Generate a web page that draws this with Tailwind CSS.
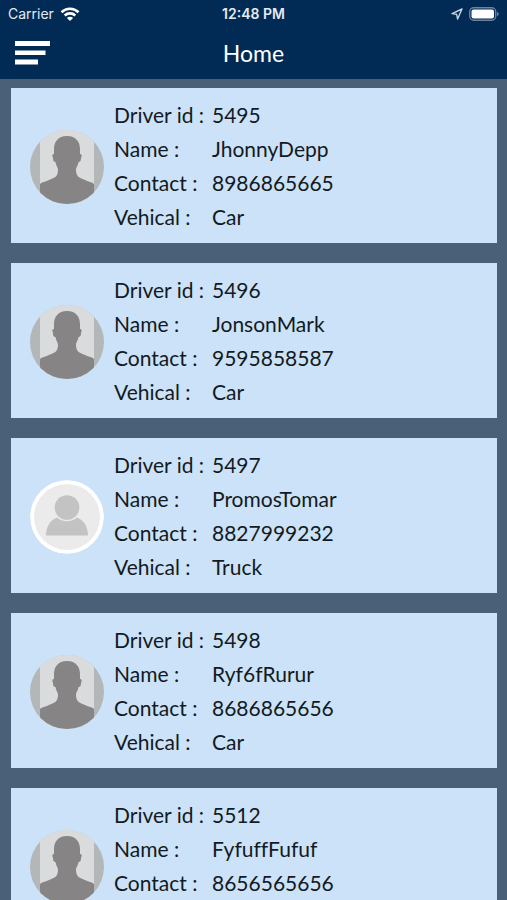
<!DOCTYPE html>
<html lang="en">
<head>
<meta charset="utf-8">
<meta name="viewport" content="width=device-width, initial-scale=1">
<title>Home</title>
<script src="https://cdn.jsdelivr.net/npm/@tailwindcss/browser@4"></script>
</head>
<body class="flex h-screen flex-col overflow-hidden bg-[#4a6079] font-['Lato','Liberation_Sans',sans-serif] text-[#131a22]">

<svg class="hidden" aria-hidden="true">
  <defs>
    <symbol id="silhouette" viewBox="0 0 74 74">
      <rect width="74" height="74" fill="#b3b7b8"/>
      <rect x="10" width="54" height="74" fill="#d9dbdc"/>
      <path fill="#d9dbdc" d="M10 11L22 0H52L64 11Z"/>
      <path fill="#868485" d="M37 6C28 6 24 12 24 19L24 24C22 24 22 26 23 28C23 31 24 32 25.500 32C26 36 28 37 28 40C28 47 24 48 19 50C15 52 12 52 10 54V74H64V54C62 52 59 52 55 50C50 48 46 47 46 40C46 37 48 36 48.500 32C50 32 51 31 51 28C52 26 52 24 50 24L50 19C50 12 46 6 37 6Z"/>
    </symbol>
    <symbol id="person" viewBox="0 0 74 74">
      <circle cx="37" cy="37" r="37" fill="#fff"/>
      <circle cx="37" cy="37" r="33" fill="#ebebeb"/>
      <path fill="#c3c3c3" d="M16 55.500C16 47 20 40 27 37.500C33 42.500 41 42.500 47 37.500C54 40 58 47 58 55.500Z"/>
      <circle cx="37" cy="27.500" r="12.300" fill="#c3c3c3"/>
    </symbol>
  </defs>
</svg>

<header class="shrink-0 bg-[#012a54] text-white">
  <div class="grid h-7 grid-cols-3 items-center px-2 font-['Inter','Liberation_Sans',sans-serif] text-sm text-[#e3eaf1]">
    <div class="flex items-center gap-1.5">
      <span>Carrier</span>
      <svg class="h-3.5 w-5" viewBox="0 0 20 14" fill="none" stroke="#fff" stroke-width="2.600" aria-label="Wi-Fi">
        <path d="M1.500 5.200C6.300 .6 13.700 .6 18.500 5.200M4.700 8.500C7.700 5.700 12.300 5.700 15.300 8.500"/>
        <path fill="#fff" stroke="none" d="M10 14L6.900 10.900C8.600 9.300 11.400 9.300 13.100 10.900Z"/>
      </svg>
    </div>
    <span class="text-center font-semibold">12:48 PM</span>
    <div class="flex items-center justify-end gap-1.5">
      <svg class="h-3 w-3" viewBox="0 0 12 12" fill="none" stroke="#c5d2df" stroke-width="1.400" stroke-linejoin="round" aria-label="Location"><path d="M11 1L1 5.600L5.600 6.200L6.600 11Z"/></svg>
      <svg class="h-3.5 w-[30px]" viewBox="0 0 30 14" aria-label="Battery">
        <rect x=".7" y=".7" width="26" height="12.600" rx="4" fill="none" stroke="#6b839d" stroke-width="1.400"/>
        <rect x="2.500" y="2.500" width="22.500" height="9" rx="2" fill="#fff"/>
        <path fill="#6b839d" d="M28 4.800Q29.800 5.500 29.800 7T28 9.200Z"/>
      </svg>
    </div>
  </div>
  <div class="grid h-[51px] grid-cols-3 items-center px-3.5">
    <button type="button" aria-label="Menu" class="w-9">
      <svg class="h-[26px] w-9" viewBox="0 0 36 26" fill="#fff"><path d="M1 0H36V5H1ZM1 9.500H31.500V14H1ZM1 18.500H24V23.500H1Z"/></svg>
    </button>
    <h1 class="text-center text-[23px] font-normal">Home</h1>
  </div>
</header>

<main class="min-h-0 flex-1 overflow-y-auto pt-[9px] pr-2.5 pl-[11px] [scrollbar-width:none]">
  <ul class="flex flex-col gap-5 text-[21px] leading-[34px] [font-variant-ligatures:none]">
    <li class="flex min-h-[155px] items-start bg-[#cbe2f8] pt-2.5 pl-[19px]">
      <svg class="mt-8 mr-2.5 size-[74px] shrink-0 rounded-full" role="img" aria-label="Driver photo"><use href="#silhouette"/></svg>
      <dl class="grid grid-cols-[98px_auto] whitespace-nowrap">
        <dt>Driver id :</dt><dd>5495</dd>
        <dt>Name :</dt><dd>JhonnyDepp</dd>
        <dt>Contact :</dt><dd>8986865665</dd>
        <dt>Vehical :</dt><dd>Car</dd>
      </dl>
    </li>
    <li class="flex min-h-[155px] items-start bg-[#cbe2f8] pt-2.5 pl-[19px]">
      <svg class="mt-8 mr-2.5 size-[74px] shrink-0 rounded-full" role="img" aria-label="Driver photo"><use href="#silhouette"/></svg>
      <dl class="grid grid-cols-[98px_auto] whitespace-nowrap">
        <dt>Driver id :</dt><dd>5496</dd>
        <dt>Name :</dt><dd>JonsonMark</dd>
        <dt>Contact :</dt><dd>9595858587</dd>
        <dt>Vehical :</dt><dd>Car</dd>
      </dl>
    </li>
    <li class="flex min-h-[155px] items-start bg-[#cbe2f8] pt-2.5 pl-[19px]">
      <svg class="mt-8 mr-2.5 size-[74px] shrink-0 rounded-full" role="img" aria-label="Driver photo"><use href="#person"/></svg>
      <dl class="grid grid-cols-[98px_auto] whitespace-nowrap">
        <dt>Driver id :</dt><dd>5497</dd>
        <dt>Name :</dt><dd>PromosTomar</dd>
        <dt>Contact :</dt><dd>8827999232</dd>
        <dt>Vehical :</dt><dd>Truck</dd>
      </dl>
    </li>
    <li class="flex min-h-[155px] items-start bg-[#cbe2f8] pt-2.5 pl-[19px]">
      <svg class="mt-8 mr-2.5 size-[74px] shrink-0 rounded-full" role="img" aria-label="Driver photo"><use href="#silhouette"/></svg>
      <dl class="grid grid-cols-[98px_auto] whitespace-nowrap">
        <dt>Driver id :</dt><dd>5498</dd>
        <dt>Name :</dt><dd>Ryf6fRurur</dd>
        <dt>Contact :</dt><dd>8686865656</dd>
        <dt>Vehical :</dt><dd>Car</dd>
      </dl>
    </li>
    <li class="flex min-h-[155px] items-start bg-[#cbe2f8] pt-2.5 pl-[19px]">
      <svg class="mt-8 mr-2.5 size-[74px] shrink-0 rounded-full" role="img" aria-label="Driver photo"><use href="#silhouette"/></svg>
      <dl class="grid grid-cols-[98px_auto] whitespace-nowrap">
        <dt>Driver id :</dt><dd>5512</dd>
        <dt>Name :</dt><dd>FyfuffFufuf</dd>
        <dt>Contact :</dt><dd>8656565656</dd>
      </dl>
    </li>
  </ul>
</main>
</body>
</html>
